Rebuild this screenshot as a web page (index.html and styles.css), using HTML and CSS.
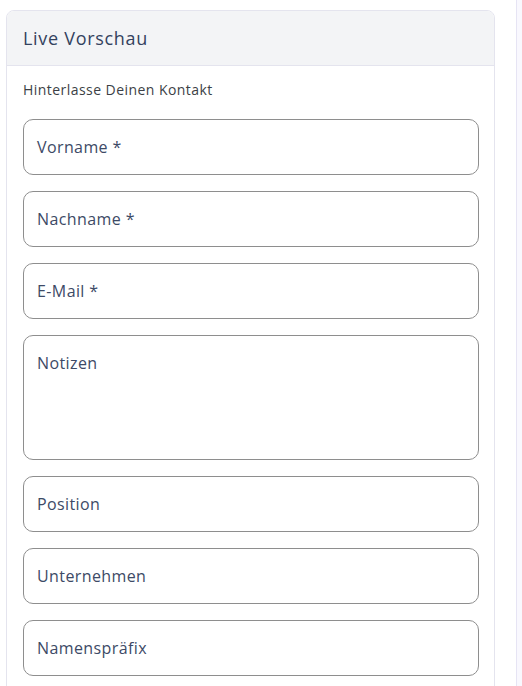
FILE: index.html
```html
<!DOCTYPE html>
<html lang="de">
<head>
<meta charset="utf-8">
<title>Live Vorschau</title>
<link rel="stylesheet" href="styles.css">
</head>
<body>
<div class="layout">
  <main class="main">
    <section class="card">
      <header class="card-header">
        <h2 class="card-title">Live Vorschau</h2>
      </header>
      <div class="card-body">
        <p class="form-title">Hinterlasse Deinen Kontakt</p>
        <div class="fields">
          <div class="field"><span class="ph">Vorname *</span></div>
          <div class="field"><span class="ph">Nachname *</span></div>
          <div class="field"><span class="ph">E-Mail *</span></div>
          <div class="field area"><span class="ph">Notizen</span></div>
          <div class="field"><span class="ph">Position</span></div>
          <div class="field"><span class="ph">Unternehmen</span></div>
          <div class="field"><span class="ph">Namenspräfix</span></div>
        </div>
      </div>
    </section>
  </main>
  <aside class="side"></aside>
</div>
</body>
</html>
```
FILE: styles.css
```css
* { box-sizing: border-box; }
html, body { margin: 0; padding: 0; background: #ffffff; }
body {
  font-family: "Open Sans", "Noto Sans", sans-serif;
  height: 686px;
  overflow: hidden;
}
.layout {
  display: flex;
  height: 686px;
  overflow: hidden;
}
.main {
  width: 516px;
  padding: 10px 21px 0 6px;
}
.side {
  flex: 1;
  border-left: 1px solid #e6e4f4;
  background: #f9f8fe;
}
.card {
  border: 1px solid #e4e4ee;
  border-radius: 8px;
  background: #fff;
  overflow: hidden;
}
.card-header {
  height: 55px;
  background: #f3f4f6;
  border-bottom: 1px solid #e4e4ee;
  display: flex;
  align-items: center;
  padding: 0 16px;
}
.card-title {
  margin: 0;
  font-size: 18px;
  font-weight: 500;
  color: #33425e;
  letter-spacing: 0.7px;
}
.card-body {
  padding: 14px 15px 30px 16px;
}
.form-title {
  margin: 0 0 19px;
  font-size: 14px;
  line-height: 20px;
  font-weight: 500;
  color: #3c3f46;
  letter-spacing: 0.45px;
}
.fields {
  display: flex;
  flex-direction: column;
  gap: 16px;
}
.field {
  height: 56px;
  border: 1px solid #8e8e8e;
  border-radius: 10px;
  padding: 0 13px;
  display: flex;
  align-items: center;
}
.field.area {
  height: 125px;
  align-items: flex-start;
  padding-top: 15px;
}
.ph {
  font-size: 16px;
  line-height: 24px;
  color: #3d4a66;
  letter-spacing: 0.4px;
}
```
